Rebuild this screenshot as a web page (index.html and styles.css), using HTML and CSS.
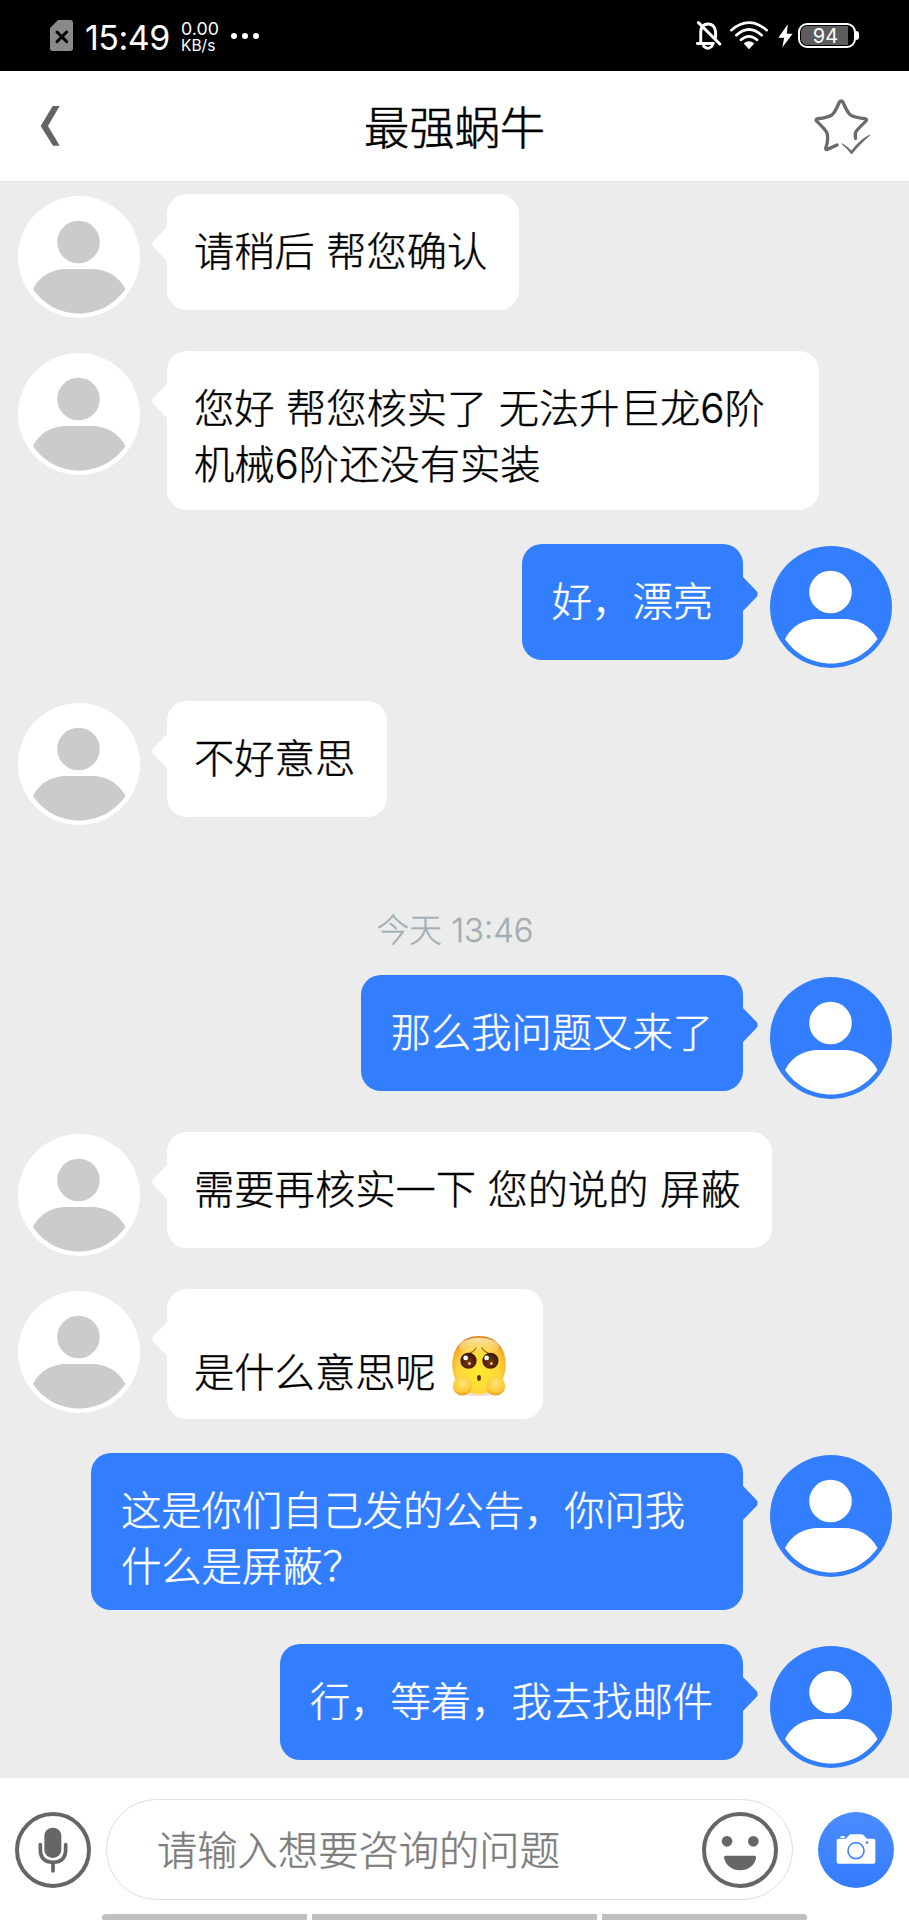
FILE: index.html
```
<!DOCTYPE html>
<html lang="zh-CN">
<head>
<meta charset="utf-8">
<title>最强蜗牛</title>
<link rel="stylesheet" href="styles.css">
</head>
<body>
<svg class="defs" width="0" height="0" aria-hidden="true">
  <symbol id="person" viewBox="0 0 122 122">
    <circle cx="61" cy="61" r="61" class="disc"/>
    <circle cx="60.500" cy="46" r="21.300" class="figure"/>
    <path class="figure" d="M15 93C22 79 35 73 48 73H74C87 73 100 79 107.500 93C97 108 80 117.500 61 117.500S25 108 15 93Z"/>
  </symbol>
</svg>
<div class="screen">
  <div class="status">
    <svg class="sim" viewBox="0 0 69 93"><path d="M24 0H61Q69 0 69 8V85Q69 93 61 93H8Q0 93 0 85V24Z" fill="#8a8a8a"/><path d="M21 36L50 65M50 36L21 65" stroke="#000" stroke-width="9" stroke-linecap="round"/></svg>
    <span class="clock">15:49</span>
    <span class="speed"><span class="rate">0.00</span><span class="unit">KB/s</span></span>
    <span class="dots"><i></i><i></i><i></i></span>
    <span class="grow"></span>
    <svg class="bell" viewBox="0 0 78 88" fill="none" stroke="#fff" stroke-width="9"><path d="M14 66V32Q16 9 36 9T59 32V50M4 68H52" stroke-linecap="round"/><path d="M7 5L72 70" stroke-linecap="round"/><path d="M20 73Q36 93 51 73" stroke-width="8"/></svg>
    <svg class="wifi" viewBox="0 0 114 86" fill="none" stroke="#fff" stroke-width="8" stroke-linecap="round"><path d="M4 27Q57 -18 110 27M19 42Q57 8 95 42M33 56Q57 35 81 56"/><path d="M41 67Q57 54 73 67L57 84Z" fill="#fff" stroke="none"/></svg>
    <svg class="bolt" viewBox="0 0 46 72"><path d="M30 0L1 41H19L13 71L45 29H27Z" fill="#fff"/></svg>
    <span class="battery"><span class="charge">94</span></span><i class="tip"></i>
  </div>
  <header class="bar">
    <svg class="back" viewBox="0 0 58 120"><path d="M37 0H58L23 60L58 119H38L1 60Z" fill="#646464"/></svg>
    <h1 class="title">最强蜗牛</h1>
    <svg class="star" viewBox="0 0 176 176" fill="none" stroke="#6b6b6b" stroke-width="10" stroke-linecap="round" stroke-linejoin="round"><path d="M72 143L41 157Q38 157 38 153Q47 126 42 108Q39 99 11 72Q7 67 13 65Q48 61 57 53Q65 47 79 15Q84 8 89 15Q103 47 111 53Q121 61 156 65Q162 67 158 72Q130 98 127 106Q125 113 127 124"/><path d="M87 140Q103 149 115 162Q139 129 169 114Q143 136 115 169Q104 154 87 140Z" fill="#6b6b6b" stroke-width="3"/></svg>
  </header>
  <main class="chat">
    <div class="row"><svg class="avatar"><use href="#person"/></svg><div class="bubble">请稍后 帮您确认</div></div>
    <div class="row"><svg class="avatar"><use href="#person"/></svg><div class="bubble wide">您好 帮您核实了 无法升巨龙6阶<br>机械6阶还没有实装</div></div>
    <div class="row mine"><svg class="avatar"><use href="#person"/></svg><div class="bubble">好，漂亮</div></div>
    <div class="row"><svg class="avatar"><use href="#person"/></svg><div class="bubble">不好意思</div></div>
    <time class="stamp">今天 13:46</time>
    <div class="row mine"><svg class="avatar"><use href="#person"/></svg><div class="bubble">那么我问题又来了</div></div>
    <div class="row"><svg class="avatar"><use href="#person"/></svg><div class="bubble">需要再核实一下 您的说的 屏蔽</div></div>
    <div class="row"><svg class="avatar"><use href="#person"/></svg><div class="bubble with-face"><span>是什么意思呢</span><svg class="face" viewBox="0 0 58 65">
      <defs>
        <radialGradient id="skin" cx=".5" cy=".62" r=".62"><stop offset="0" stop-color="#ffe92e"/><stop offset=".65" stop-color="#ffd43d"/><stop offset=".88" stop-color="#f9ad2a"/><stop offset="1" stop-color="#dd7a18"/></radialGradient>
        <linearGradient id="shine" x1="0" y1="0" x2="0" y2="1"><stop offset="0" stop-color="#fff6d0"/><stop offset="1" stop-color="#fff0a0" stop-opacity="0"/></linearGradient>
        <radialGradient id="hand" cx=".5" cy=".35" r=".65"><stop offset="0" stop-color="#ffe47a"/><stop offset=".75" stop-color="#ffc933"/><stop offset="1" stop-color="#e59320"/></radialGradient>
        <radialGradient id="eye" cx=".5" cy=".6" r=".6"><stop offset="0" stop-color="#7a3a10"/><stop offset="1" stop-color="#341404"/></radialGradient>
      </defs>
      <ellipse cx="29" cy="61" rx="18" ry="3" fill="#edb9aa" opacity=".5"/>
      <path d="M29 1C47 1 57 14 57 31S47 62 29 62S1 48 1 31S11 1 29 1Z" fill="url(#skin)"/>
      <ellipse cx="29" cy="12" rx="21" ry="9" fill="url(#shine)" opacity=".8"/>
      <path d="M19 19Q25 17 26 13M39 19Q33 17 32 13" fill="none" stroke="#a96219" stroke-width="1.200"/>
      <circle cx="18" cy="27" r="8.500" fill="url(#eye)"/><circle cx="41" cy="27" r="8.500" fill="url(#eye)"/>
      <circle cx="15" cy="24" r="2.500" fill="#fff"/><circle cx="37" cy="24" r="2.500" fill="#fff"/><circle cx="19" cy="30" r="1.500" fill="#eec9a8"/><circle cx="42" cy="30" r="1.500" fill="#eec9a8"/>
      <ellipse cx="29" cy="45" rx="2" ry="3" fill="#5b3008"/>
      <circle cx="11.500" cy="53.500" r="10" fill="url(#hand)"/><circle cx="46.500" cy="53.500" r="10" fill="url(#hand)"/>
    </svg></div></div>
    <div class="row mine"><svg class="avatar"><use href="#person"/></svg><div class="bubble wide">这是你们自己发的公告，你问我<br>什么是屏蔽？</div></div>
    <div class="row mine"><svg class="avatar"><use href="#person"/></svg><div class="bubble">行，等着，我去找邮件</div></div>
  </main>
  <footer class="dock">
    <div class="composer">
      <svg class="round mic" viewBox="0 0 228 228" fill="none" stroke="#666"><circle cx="114" cy="114" r="108" stroke-width="12"/><rect x="88" y="47" width="51" height="91" rx="25" fill="#666" stroke="none"/><path d="M76 98V112Q76 151 114 151T152 112V98M114 151V177" stroke-width="11" stroke-linecap="round"/></svg>
      <div class="field"><span class="hint">请输入想要咨询的问题</span>
        <svg class="round" viewBox="0 0 228 228"><circle cx="114" cy="114" r="108" fill="none" stroke="#666" stroke-width="12"/><circle cx="75" cy="88" r="16" fill="#666"/><circle cx="154" cy="88" r="16" fill="#666"/><path d="M66 136Q66 131 71 131H158Q163 131 162 138C158 161 138 175 114 175S70 161 66 136Z" fill="#666"/></svg>
      </div>
      <svg class="round camera" viewBox="0 0 228 228"><defs><linearGradient id="blue" x1="0" y1="0" x2="0" y2="1"><stop offset="0" stop-color="#4c8bff"/><stop offset="1" stop-color="#337cfe"/></linearGradient></defs><circle cx="114" cy="114" r="114" fill="url(#blue)"/><path d="M56 86Q56 80 62 80H83L94 69Q95 67 99 67H130Q134 67 136 69L147 80H166Q172 80 172 86V149Q172 155 166 155H62Q56 155 56 149Z" fill="#fff"/><rect x="67" y="72" width="14" height="6" rx="3" fill="#fff"/><circle cx="114" cy="116" r="24" fill="none" stroke="#4687ff" stroke-width="5"/><circle cx="147" cy="92" r="4" fill="#4687ff"/></svg>
    </div>
    <div class="tabs"><i></i><i></i><i></i></div>
  </footer>
</div>
</body>
</html>
```
FILE: styles.css
```
* { box-sizing: border-box; }
body {
  margin: 0;
  font-family: Inter, "Noto Sans CJK SC", sans-serif;
  font-weight: 300;
}
svg { display: block; flex: none; }
.defs { position: absolute; }
.screen {
  width: 909px;
  height: 1920px;
  display: flex;
  flex-direction: column;
  overflow: hidden;
  background: #ececec;
}

/* Status bar */
.status {
  height: 71px;
  padding: 0 50px 0 50px;
  background: #000;
  color: #fff;
  display: flex;
  align-items: center;
  flex: none;
}
.sim { width: 23px; height: 31px; }
.clock { margin-left: 12px; font: 400 34px/40px Inter, sans-serif; width: 84px; letter-spacing: -0.5px; padding-top: 4px; }
.speed { display: flex; flex-direction: column; margin-left: 12px; width: 38px; padding-top: 2px; font-family: Inter, sans-serif; font-weight: 400; white-space: nowrap; }
.rate { font-size: 17.8px; line-height: 18px; }
.unit { font-size: 15.5px; line-height: 16px; }
.dots { display: flex; gap: 5px; margin-left: 12px; }
.dots i { width: 6px; height: 6px; border-radius: 50%; background: #fff; }
.grow { flex: 1; }
.bell { width: 26px; height: 29px; margin-right: 8px; }
.wifi { width: 38px; height: 29px; margin-right: 10px; }
.bolt { width: 15px; height: 24px; margin-right: 5px; }
.battery {
  width: 58px;
  height: 25px;
  padding: 1px;
  border: 2px solid #fff;
  border-radius: 9px;
}
.charge {
  display: block;
  width: 47px;
  height: 19px;
  padding-left: 2px;
  border-radius: 6px 0 0 6px;
  background: #5d5d5d;
  font: 400 20px/20px Inter, sans-serif;
  text-align: center;
}
.tip { width: 3px; height: 9px; border-radius: 0 3px 3px 0; background: #fff; }

/* Title bar */
.bar {
  height: 111px;
  padding: 0 37px 0 40px;
  background: #fff;
  border-bottom: 1px solid #e0e0e0;
  display: flex;
  align-items: center;
  justify-content: space-between;
  flex: none;
}
.back { width: 20px; height: 40px; }
.title {
  margin: 0 0 0 36px;
  padding-top: 6px;
  font-size: 45.3px;
  font-weight: 300;
  line-height: 60px;
  color: #000;
  -webkit-text-stroke: 0.6px currentColor;
}
.star { width: 59px; height: 59px; }

/* Conversation */
.chat {
  flex: 1;
  padding: 12px 17px 0 18px;
  display: flex;
  flex-direction: column;
  gap: 34px;
}
.row {
  display: flex;
  align-items: flex-start;
  gap: 27px;
  min-height: 123px;
}
.mine { flex-direction: row-reverse; }
.avatar { width: 122px; height: 122px; margin: 2px 0 -1px; }
.row .avatar { color: #cbcbcb; fill: #fff; }
.figure { fill: currentColor; }
.mine .avatar { color: #fff; fill: #327eff; }
.bubble {
  position: relative;
  min-height: 116px;
  padding: 30px 31.5px 17px 27px;
  border-radius: 20px;
  background: #fff;
  color: #000;
  font-size: 40.3px;
  line-height: 56px;
  white-space: nowrap;
  -webkit-text-stroke: 0.4px currentColor;
}
.mine .bubble { background: #327eff; color: #fff; padding: 30px 30px 15px; }
.bubble.wide { width: 652px; }
.bubble::before {
  content: "";
  position: absolute;
  top: 32px;
  left: -15px;
  width: 16px;
  height: 36px;
  background: inherit;
  clip-path: polygon(100% 0, 12% 40%, 3% 46%, 3% 54%, 12% 60%, 100% 100%);
}
.mine .bubble::before { left: auto; right: -15px; transform: scaleX(-1); }
.bubble.with-face { display: flex; gap: 14px; width: 376px; height: 130px; padding-top: 46px; padding-bottom: 19px; }
.with-face span { padding-top: 10px; }
.face { width: 58px; height: 62px; }
.stamp {
  align-self: center;
  margin: 47px 0 -14px;
  font-size: 32.8px;
  line-height: 50px;
  color: #a3adb4;
  -webkit-text-stroke: 0.3px currentColor;
}

/* Message composer */
.dock { height: 142px; background: #fff; flex: none; }
.composer { display: flex; align-items: center; padding: 21px 14px 0 15px; }
.round { width: 76px; height: 76px; }
.field {
  width: 687px;
  height: 101px;
  margin: 0 25px 0 15px;
  padding: 0 14px 0 50px;
  border: 1px solid #dedede;
  border-radius: 51px;
  display: flex;
  align-items: center;
  justify-content: space-between;
}
.hint { padding-top: 2px; font-size: 40.3px; line-height: 60px; color: #7c7c7c; -webkit-text-stroke: 0.4px currentColor; }
.tabs { display: flex; gap: 5px; margin: 14px 0 0 102px; }
.tabs i { height: 7px; width: 205px; background: #c0c0c0; }
.tabs i:nth-child(2) { width: 285px; }
.tabs i:first-child { border-radius: 4px 0 0 4px; }
.tabs i:last-child { border-radius: 0 4px 4px 0; }
```
